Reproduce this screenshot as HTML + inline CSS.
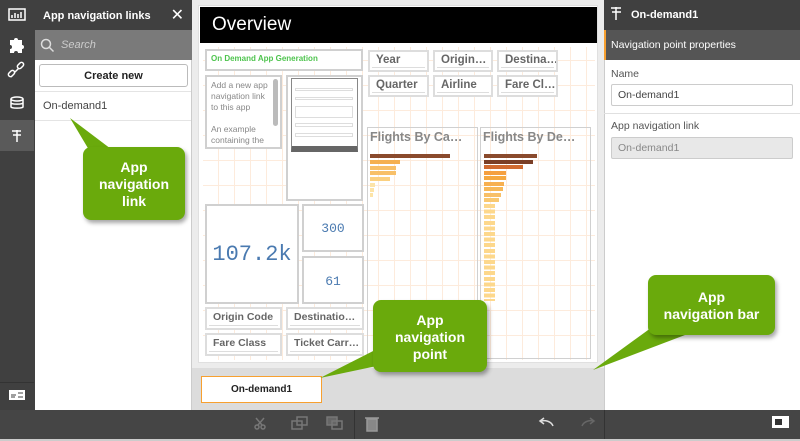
<!DOCTYPE html>
<html><head><meta charset="utf-8"><style>
*{margin:0;padding:0;box-sizing:border-box}
body{width:800px;height:441px;overflow:hidden;font-family:"Liberation Sans",sans-serif;background:#e8e8e8;position:relative}
.a{position:absolute}
.box{position:absolute;background:#fff;border:1px solid #d0d0d0}
.flt{position:absolute;background:#fff;border:2px solid #ddd;font-weight:bold;color:#666;font-size:11.5px;padding:2px 0 0 6px;white-space:nowrap;overflow:hidden}
.flt:after{content:"";position:absolute;left:2px;right:2px;bottom:2px;height:1px;background:#ddd}
.bar{position:absolute;height:4px}
.call{position:absolute;background:#6aaa0c;border-radius:8px;color:#fff;font-weight:bold;font-size:14px;text-align:center;line-height:17px;box-shadow:2px 3px 4px rgba(0,0,0,.35)}
</style></head><body>
<div class="a" style="left:0;top:0;width:35px;height:410px;background:#404040"></div>
<div class="a" style="left:0;top:120px;width:34px;height:31px;background:#5a5a5a"></div>
<div class="a" style="left:0;top:382px;width:34px;height:1px;background:#333"></div>
<svg class="a" style="left:0;top:0" width="35" height="410">
<g fill="none" stroke="#fff" stroke-width="1.5">
<rect x="9" y="9" width="16" height="11"/>
<path d="M12 18v-3M15 18v-5M18 18v-4M21 18v-6"/>
<path d="M14 73l5-5M11 77l3-3a2 2 0 0 0-3-3l-2 2a2 2 0 0 0 3 3M21 68l2-2a2 2 0 0 0-3-3l-2 2a2 2 0 0 0 3 3"/>
<ellipse cx="17" cy="99" rx="6" ry="2"/><path d="M11 99v8c0 1.5 12 1.5 12 0v-8M11 103c0 1.5 12 1.5 12 0"/>
<path d="M17 130v12M12 131h9M13 135h8"/>
</g>
<path d="M10 40h4a2 2 0 0 1 4 0h4v5a2 2 0 0 1 0 4v4h-4a2 2 0 0 0-4 0h-4v-4a2 2 0 0 0 0-4z" fill="#fff"/>
<rect x="9" y="390" width="16" height="10" fill="#fff"/><path d="M11 395h5M18 393h5M18 397h5M11 397h4" stroke="#404040"/>
</svg>
<div class="a" style="left:35px;top:0;width:157px;height:30px;background:#404040;color:#fff;font-weight:bold;font-size:11px;padding:10px 0 0 8px">App navigation links<span style="position:absolute;right:8px;top:5px;font-size:16px;font-weight:normal">✕</span></div>
<div class="a" style="left:35px;top:30px;width:157px;height:30px;background:#7a7a7a;color:#ccc;font-style:italic;font-size:11px;padding:9px 0 0 26px">Search</div>
<svg class="a" style="left:40px;top:38px" width="16" height="16"><circle cx="6" cy="6" r="4.5" fill="none" stroke="#ddd" stroke-width="1.5"/><path d="M9.5 9.5l4 4" stroke="#ddd" stroke-width="1.5"/></svg>
<div class="a" style="left:35px;top:60px;width:157px;height:350px;background:#fff;border-right:1px solid #ccc"></div>
<div class="a" style="left:39px;top:64px;width:149px;height:23px;border:1px solid #bbb;border-radius:3px;font-weight:bold;font-size:11px;text-align:center;padding-top:5px;color:#222">Create new</div>
<div class="a" style="left:35px;top:91px;width:156px;height:1px;background:#e4e4e4"></div>
<div class="a" style="left:43px;top:100px;font-size:11px;color:#444">On-demand1</div>
<div class="a" style="left:35px;top:120px;width:156px;height:1px;background:#e4e4e4"></div>
<div class="a" style="left:192px;top:0;width:412px;height:410px;background:#ececec"></div>
<div class="a" style="left:198px;top:5px;width:400px;height:358px;background:#fff;border:1px solid #e0e0e0"></div>
<div class="a" style="left:203px;top:47px;width:392px;height:313px;background-image:repeating-linear-gradient(90deg,transparent 0,transparent 15px,#fdebdc 15px,#fdebdc 16px),repeating-linear-gradient(0deg,transparent 0,transparent 24px,#fdebdc 24px,#fdebdc 25px)"></div>
<div class="a" style="left:200px;top:7px;width:397px;height:36px;background:#000;color:#fff;font-size:19px;padding:7px 0 0 12px">Overview</div>
<div class="box" style="left:205px;top:49px;width:158px;height:22px;border-width:2px;color:#4ec44e;font-weight:bold;font-size:8px;padding:3px 0 0 4px">On Demand App Generation</div>
<div class="box" style="left:205px;top:75px;width:77px;height:74px;border-width:2px;color:#888;font-size:8.5px;line-height:11px;padding:3px 10px 0 4px;overflow:hidden">Add a new app navigation link to this app<br><br>An example containing the</div>
<div class="a" style="left:273px;top:79px;width:5px;height:47px;background:#bbb;border-radius:3px"></div>
<div class="box" style="left:286px;top:75px;width:77px;height:126px;border-width:2px"></div>
<div class="a" style="left:291px;top:78px;width:67px;height:74px;background:#fff;border:1px solid #888;border-bottom:6px solid #666"></div>
<div class="a" style="left:295px;top:88px;width:58px;height:3px;border:1px solid #ddd"></div>
<div class="a" style="left:295px;top:97px;width:58px;height:3px;border:1px solid #ddd"></div>
<div class="a" style="left:295px;top:106px;width:58px;height:12px;border:1px solid #ddd"></div>
<div class="a" style="left:295px;top:123px;width:58px;height:4px;border:1px solid #ddd"></div>
<div class="a" style="left:295px;top:133px;width:58px;height:4px;border:1px solid #ddd"></div>
<div class="flt" style="left:368px;top:50px;width:61px;height:22px">Year</div>
<div class="flt" style="left:433px;top:50px;width:60px;height:22px">Origin…</div>
<div class="flt" style="left:497px;top:50px;width:61px;height:22px">Destina…</div>
<div class="flt" style="left:368px;top:75px;width:61px;height:22px">Quarter</div>
<div class="flt" style="left:433px;top:75px;width:60px;height:22px">Airline</div>
<div class="flt" style="left:497px;top:75px;width:61px;height:22px">Fare Cl…</div>
<div class="box" style="left:205px;top:204px;width:94px;height:100px;border-width:2px;color:#4a7ab0;font-size:22px;font-family:'Liberation Mono',monospace;text-align:center;padding-top:36px">107.2k</div>
<div class="box" style="left:302px;top:204px;width:62px;height:48px;border-width:2px;color:#4a7ab0;font-size:13px;font-family:'Liberation Mono',monospace;text-align:center;padding-top:15px">300</div>
<div class="box" style="left:302px;top:256px;width:62px;height:48px;border-width:2px;color:#4a7ab0;font-size:13px;font-family:'Liberation Mono',monospace;text-align:center;padding-top:16px">61</div>
<div class="flt" style="left:205px;top:307px;width:77px;height:23px;font-size:10.5px">Origin Code</div>
<div class="flt" style="left:286px;top:307px;width:78px;height:23px;font-size:10.5px">Destinatio…</div>
<div class="flt" style="left:205px;top:333px;width:77px;height:23px;font-size:10.5px">Fare Class</div>
<div class="flt" style="left:286px;top:333px;width:78px;height:23px;font-size:10.5px">Ticket Carr…</div>
<div class="box" style="left:367px;top:127px;width:111px;height:232px;border-width:1px;background:transparent;color:#888;font-weight:bold;font-size:12.5px;padding:2px 0 0 2px">Flights By Ca…</div>
<div class="box" style="left:480px;top:127px;width:111px;height:232px;border-width:1px;background:transparent;color:#888;font-weight:bold;font-size:12.5px;padding:2px 0 0 2px">Flights By De…</div>
<div class="bar" style="left:370px;top:154px;width:80px;background:#8a4a2c"></div>
<div class="bar" style="left:370px;top:160px;width:30px;background:#f5b050"></div>
<div class="bar" style="left:370px;top:166px;width:26px;background:#f8c068"></div>
<div class="bar" style="left:370px;top:171px;width:26px;background:#f8c068"></div>
<div class="bar" style="left:370px;top:177px;width:20px;background:#fbd080"></div>
<div class="bar" style="left:370px;top:183px;width:5px;background:#fde4a8"></div>
<div class="bar" style="left:370px;top:188px;width:4px;background:#fde4a8"></div>
<div class="bar" style="left:370px;top:193px;width:3px;background:#fde4a8"></div>
<div class="bar" style="left:484px;top:154px;width:53px;background:#8a4a2c"></div>
<div class="bar" style="left:484px;top:160px;width:49px;background:#7a3e26"></div>
<div class="bar" style="left:484px;top:165px;width:39px;background:#d06a30"></div>
<div class="bar" style="left:484px;top:171px;width:22px;background:#f5a040"></div>
<div class="bar" style="left:484px;top:176px;width:22px;background:#f5a840"></div>
<div class="bar" style="left:484px;top:182px;width:20px;background:#f7b050"></div>
<div class="bar" style="left:484px;top:187px;width:19px;background:#f7b858"></div>
<div class="bar" style="left:484px;top:193px;width:17px;background:#f8c068"></div>
<div class="bar" style="left:484px;top:198px;width:15px;background:#f9c870"></div>
<div class="a" style="left:484px;top:204px;width:11px;height:97px;background:repeating-linear-gradient(180deg,#fdd88c 0,#fdd88c 4px,transparent 4px,transparent 5.6px)"></div>
<div class="a" style="left:192px;top:368px;width:412px;height:42px;background:#dcdcdc"></div>
<div class="a" style="left:201px;top:376px;width:121px;height:27px;background:#fff;border:1px solid #f7a030;font-weight:bold;font-size:10px;text-align:center;padding-top:7px;color:#222">On-demand1</div>
<div class="a" style="left:604px;top:0;width:196px;height:410px;background:#fff;border-left:1px solid #ccc"></div>
<div class="a" style="left:604px;top:0;width:196px;height:30px;background:#404040;color:#fff;font-weight:bold;font-size:11px;padding:9px 0 0 27px">On-demand1</div>
<svg class="a" style="left:610px;top:5px" width="14" height="16"><path d="M6 2v13M1 3h10M2 7h9" stroke="#fff" stroke-width="1.5" fill="none"/></svg>
<div class="a" style="left:604px;top:30px;width:196px;height:30px;background:#555;border-left:2px solid #f7a030;color:#fff;font-size:10.5px;padding:9px 0 0 5px">Navigation point properties</div>
<div class="a" style="left:611px;top:68px;font-size:10.5px;color:#555">Name</div>
<div class="a" style="left:611px;top:84px;width:182px;height:22px;border:1px solid #ccc;border-radius:2px;font-size:10.5px;color:#444;padding:4px 0 0 6px">On-demand1</div>
<div class="a" style="left:604px;top:113px;width:196px;height:1px;background:#e0e0e0"></div>
<div class="a" style="left:611px;top:120px;font-size:10.5px;color:#555">App navigation link</div>
<div class="a" style="left:611px;top:137px;width:182px;height:22px;border:1px solid #ccc;border-radius:2px;background:#e8e8e8;font-size:10.5px;color:#888;padding:4px 0 0 6px">On-demand1</div>
<div class="a" style="left:0;top:410px;width:800px;height:29px;background:#454545"></div>
<div class="a" style="left:0;top:439px;width:800px;height:2px;background:#ccc"></div>
<div class="a" style="left:354px;top:410px;width:1px;height:29px;background:#333"></div>
<div class="a" style="left:604px;top:410px;width:1px;height:29px;background:#333"></div>
<div class="a" style="left:772px;top:416px;width:17px;height:12px;background:#fff;border:1px solid #fff"><div style="margin:2px;width:7px;height:6px;background:#333"></div></div>
<svg class="a" style="left:250px;top:412px" width="350" height="26" fill="none" stroke="#777" stroke-width="1.5">
<circle cx="7" cy="15" r="2"/><circle cx="13" cy="15" r="2"/><path d="M8 13l6-7M12 13l-6-7"/>
<rect x="42" y="9" width="10" height="8"/><rect x="47" y="5" width="10" height="8"/>
<rect x="77" y="5" width="10" height="8" fill="#666"/><rect x="82" y="9" width="10" height="8"/>
<rect x="117" y="7" width="10" height="12" fill="#888" stroke="#999"/><path d="M115 6h14" stroke="#999"/>
<path d="M303 14c-2-5 -8-6 -12-5M294 6l-4 3 4 3" stroke="#ddd"/>
<path d="M332 14c2-5 8-6 12-5M340 6l4 3-4 3" stroke="#666"/>
</svg>
<svg class="a" style="left:0;top:0" width="800" height="441">
<path d="M70 118L115 152L95 160Z" fill="#6aaa0c"/>
<path d="M320 378L385 345L405 360Z" fill="#6aaa0c"/>
<path d="M593 370L655 325L685 335Z" fill="#6aaa0c"/>
</svg>
<div class="call" style="left:83px;top:147px;width:102px;height:73px;padding-top:12px">App<br>navigation<br>link</div>
<div class="call" style="left:373px;top:300px;width:114px;height:72px;padding-top:12px">App<br>navigation<br>point</div>
<div class="call" style="left:648px;top:275px;width:127px;height:60px;padding-top:14px">App<br>navigation bar</div>
</body></html>
